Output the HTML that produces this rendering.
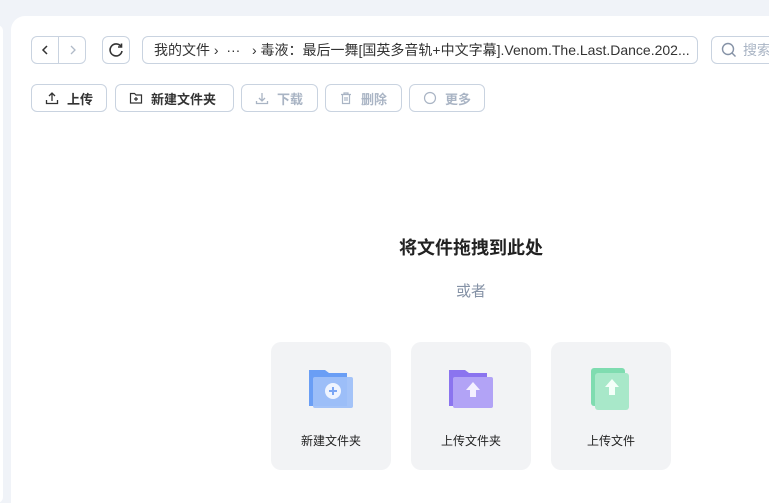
<html style="overflow:hidden;height:503px"><head><style>
body{margin:0;width:769px;height:503px;background:#f0f3f8;font-family:"Liberation Sans","Noto Sans CJK SC",sans-serif;position:relative;overflow:hidden}
.abs{position:absolute;box-sizing:border-box}
.lp{left:-10px;top:25px;width:13px;height:478px;background:#fff;border-radius:6px}
.main{left:11px;top:16px;width:780px;height:487px;background:#fff;border-radius:14px 14px 0 0}
.b{border:1px solid #c9d3e0;border-radius:6px;background:#fff;display:flex;align-items:center;font-size:13px;color:#333}
.tb{height:28px;top:84px;font-weight:bold;font-size:13px;padding-left:13px;gap:8px}
.dis{color:#a9b4c4}
.card{top:342px;width:120px;height:128px;background:#f2f3f5;border-radius:10px;font-size:12px;color:#222;text-align:center}
.card svg{position:absolute;left:36px;top:24px}
.card span{position:absolute;left:0;right:0;top:90px}
</style></head><body>
<div class="abs lp"></div>
<div class="abs main"></div>
<div class="abs b" style="left:31px;top:36px;width:55px;height:28px;padding:0">
<svg width="27" height="26"><path d="M15 9l-4 4 4 4" fill="none" stroke="#333" stroke-width="1.5"/></svg>
<div style="width:1px;height:26px;background:#c9d3e0"></div>
<svg width="27" height="26"><path d="M12 9l4 4-4 4" fill="none" stroke="#b0bac8" stroke-width="1.3"/></svg></div>
<div class="abs b" style="left:102px;top:36px;width:28px;height:28px;justify-content:center">
<svg width="16" height="16"><path d="M13 4.5A6 6 0 1 0 14 9" fill="none" stroke="#333" stroke-width="1.6"/><path d="M13.5 1.5v3.5h-3.5" fill="none" stroke="#333" stroke-width="1.6"/></svg></div>
<div class="abs b" style="left:142px;top:36px;width:556px;height:28px;padding-left:11px;white-space:nowrap;color:#333;font-size:14px">我的文件 ›&nbsp;&nbsp;···&nbsp;&nbsp;&nbsp;›&nbsp;毒液：最后一舞[国英多音轨+中文字幕].Venom.The.Last.Dance.202...</div>
<div class="abs b" style="left:711px;top:36px;width:80px;height:28px;padding-left:9px;color:#a9b4c4;gap:6px;font-size:14px">
<svg width="16" height="16"><circle cx="7" cy="7" r="5.5" fill="none" stroke="#8592a6" stroke-width="1.4"/><path d="M11 11l3.5 3.5" stroke="#8592a6" stroke-width="1.4"/></svg>搜索</div>
<div class="abs b tb" style="left:31px;width:76px"><svg width="14" height="14"><path d="M7 10V2M4 5l3-3 3 3M1.5 9v3.5h11V9" fill="none" stroke="#333" stroke-width="1.3"/></svg>上传</div>
<div class="abs b tb" style="left:115px;width:119px"><svg width="14" height="14"><path d="M1.5 2.5h4l1.5 1.5h5.5v8h-11z M7 6v4M5 8h4" fill="none" stroke="#333" stroke-width="1.2"/></svg>新建文件夹</div>
<div class="abs b tb dis" style="left:241px;width:77px"><svg width="14" height="14"><path d="M7 2v8M4 7l3 3 3-3M1.5 10v2.5h11V10" fill="none" stroke="#a9b4c4" stroke-width="1.3"/></svg>下载</div>
<div class="abs b tb dis" style="left:325px;width:77px"><svg width="14" height="14"><path d="M2 3.5h10M5 3.5V2h4v1.5M3.5 3.5v9h7v-9M6 6v4M8 6v4" fill="none" stroke="#a9b4c4" stroke-width="1.2"/></svg>删除</div>
<div class="abs b tb dis" style="left:409px;width:76px"><svg width="14" height="14"><circle cx="7" cy="7" r="5.5" fill="none" stroke="#a9b4c4" stroke-width="1.2"/></svg>更多</div>
<div class="abs" style="left:300px;width:342px;top:234px;text-align:center;font-size:18px;font-weight:bold;color:#222">将文件拖拽到此处</div>
<div class="abs" style="left:300px;width:342px;top:280px;text-align:center;font-size:15px;color:#8592a6">或者</div>
<div class="abs card" style="left:271px"><svg width="48" height="44"><path d="M2 4h16l4 3h18v33H2z" fill="#6a9ef5"/><rect x="6" y="11" width="40" height="31" rx="2" fill="#9fc0f8" opacity=".95"/><circle cx="26" cy="25" r="8" fill="#eef4ff"/><path d="M26 21v8M22 25h8" stroke="#7aa6f5" stroke-width="2"/></svg><span>新建文件夹</span></div>
<div class="abs card" style="left:411px"><svg width="48" height="44"><path d="M2 4h16l4 3h18v33H2z" fill="#8b74ef"/><rect x="6" y="11" width="40" height="31" rx="2" fill="#b2a3f6"/><path d="M26 16l-7 8h4v7h6v-7h4z" fill="#f4f0ff"/></svg><span>上传文件夹</span></div>
<div class="abs card" style="left:551px"><svg width="48" height="44"><rect x="4" y="2" width="34" height="38" rx="3" fill="#7fdcb0"/><rect x="8" y="7" width="34" height="37" rx="3" fill="#a8e8c9"/><path d="M25 13l-7 8h4v8h6v-8h4z" fill="#f4fff9"/></svg><span>上传文件</span></div>
</body></html>
